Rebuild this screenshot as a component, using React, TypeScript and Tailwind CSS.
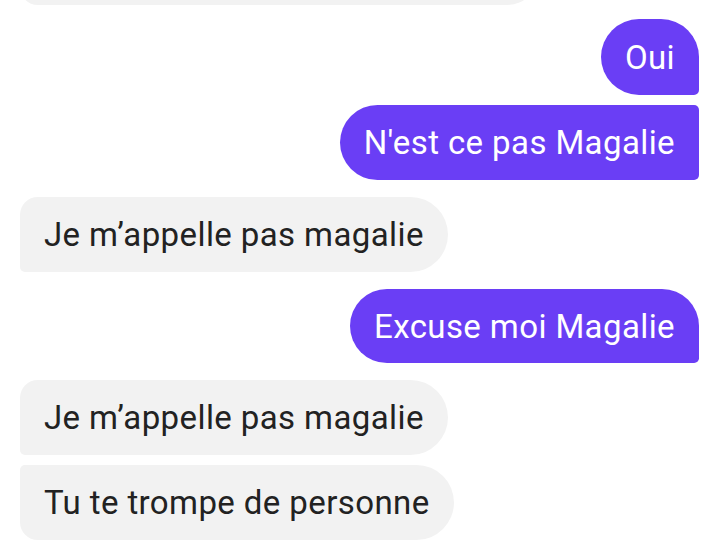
const messages = [
  { text: 'Oui', mine: true, shape: 'rounded-[38px] rounded-br-[5px]', gap: 'mt-[14px] h-[76px]' },
  { text: "N'est ce pas Magalie", mine: true, shape: 'rounded-l-[38px] rounded-r-[5px]', gap: 'mt-[10px] h-[75px]' },
  { text: 'Je m’appelle pas magalie', mine: false, shape: 'rounded-r-[38px] rounded-tl-[18px] rounded-bl-[5px]', gap: 'mt-[17px] h-[75px]' },
  { text: 'Excuse moi Magalie', mine: true, shape: 'rounded-[38px] rounded-br-[5px]', gap: 'mt-[17px] h-[74px]' },
  { text: 'Je m’appelle pas magalie', mine: false, shape: 'rounded-r-[38px] rounded-tl-[18px] rounded-bl-[5px]', gap: 'mt-[17px] h-[75px]' },
  { text: 'Tu te trompe de personne', mine: false, shape: 'rounded-r-[38px] rounded-tl-[5px] rounded-bl-[18px]', gap: 'mt-[10px] h-[75px]' },
]

export default function App() {
  return (
    <div className="h-[546px] w-[719px] overflow-hidden bg-white font-['Roboto',sans-serif]">
      <div className="flex flex-col px-[20px]">
        {/* tail of the previous received message, cut off at the top */}
        <div className="-mt-[70px] h-[75px] w-[523px] rounded-r-[38px] rounded-bl-[18px] bg-[#f2f2f2]" />

        {messages.map((m, i) => (
          <div key={i} className={`flex ${m.mine ? 'justify-end' : 'justify-start'} ${m.gap}`}>
            <div
              className={`flex h-full items-center px-[24px] text-[33px] leading-none tracking-[0.4px] ${m.shape} ${
                m.mine ? 'bg-[#6a3ef5] text-white' : 'bg-[#f2f2f2] text-[#222222]'
              }`}
            >
              {m.text}
            </div>
          </div>
        ))}
      </div>
    </div>
  )
}
